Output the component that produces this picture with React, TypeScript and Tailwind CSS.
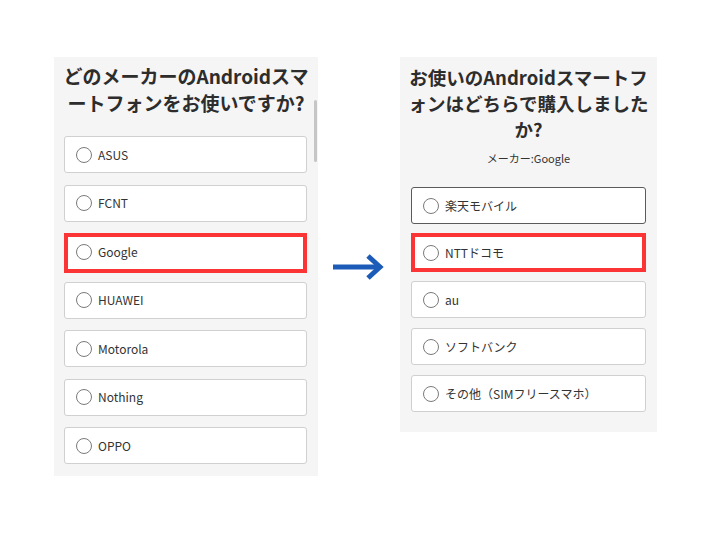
import React from 'react';

const makers = ['ASUS', 'FCNT', 'Google', 'HUAWEI', 'Motorola', 'Nothing', 'OPPO'];
const carriers = ['楽天モバイル', 'NTTドコモ', 'au', 'ソフトバンク', 'その他（SIMフリースマホ）'];

interface OptionProps {
  label: string;
  active?: boolean;
  marked?: 'left' | 'right';
}

const Option: React.FC<OptionProps> = ({ label, active, marked }) => {
  return (
    <div
      className={`relative flex items-center gap-[6px] h-[37px] pl-[11px] bg-white rounded-[3px] shrink-0 ${
        active ? 'border-[1.5px] border-[#5b5b5b]' : 'border border-[#d0d0d0]'
      }`}
    >
      <span className="w-[16px] h-[16px] rounded-full border border-[#7a7a7a] bg-white shrink-0" />
      <span className="text-[12px] text-[#333]">{label}</span>
      {marked === 'left' && (
        <span className="absolute -top-[1px] -bottom-[4px] -left-[1px] -right-[1px] border-[4px] border-[#fb3535] pointer-events-none" />
      )}
      {marked === 'right' && (
        <span className="absolute -top-[2px] -bottom-[2px] -left-[1px] -right-[1px] border-[4px] border-[#fb3535] pointer-events-none" />
      )}
    </div>
  );
};

const Arrow = () => (
  <svg width="52" height="28" viewBox="0 0 52 28" fill="none">
    <path d="M0 14H46" stroke="#1c5cb8" strokeWidth="5" />
    <path d="M35 3L47 14L35 25" stroke="#1c5cb8" strokeWidth="5" strokeLinejoin="miter" />
  </svg>
);

export default function App() {
  return (
    <div className="w-[710px] h-[533px] bg-white font-['Noto_Sans_CJK_JP','Noto_Sans',sans-serif]">
      <div className="flex items-start gap-[15px] pl-[54px] pt-[57px]">
        {/* maker question */}
        <div className="relative w-[264px] h-[419px] bg-[#f5f5f5] overflow-hidden">
          <div className="pt-[5px] text-center text-[19px] leading-[27px] font-bold text-[#2d2d2d]">
            <div className="whitespace-nowrap">どのメーカーのAndroidスマ</div>
            <div className="whitespace-nowrap">ートフォンをお使いですか?</div>
          </div>
          <div className="mt-[20px] ml-[10px] w-[243px] flex flex-col gap-[11.5px]">
            {makers.map((m) => (
              <Option key={m} label={m} marked={m === 'Google' ? 'left' : undefined} />
            ))}
            {/* next card, scrolled out of view */}
            <div className="h-[37px] bg-white rounded-[3px] border border-[#d0d0d0] shrink-0" />
          </div>
          <span className="absolute left-[260px] top-[43px] w-[3px] h-[62px] rounded-full bg-[#c6c6c6]" />
        </div>

        <div className="self-center">
          <Arrow />
        </div>

        {/* carrier question */}
        <div className="w-[257px] bg-[#f5f5f5] pt-[7px] pb-[20px]">
          <div className="text-center text-[18.5px] leading-[26px] font-bold text-[#2d2d2d]">
            <div className="whitespace-nowrap">お使いのAndroidスマートフ</div>
            <div className="whitespace-nowrap">ォンはどちらで購入しました</div>
            <div className="whitespace-nowrap">か?</div>
          </div>
          <div className="mt-[8px] text-center text-[11px] leading-[16px] text-[#333]">メーカー:Google</div>
          <div className="mt-[21px] mx-[11px] flex flex-col gap-[10px]">
            {carriers.map((c, i) => (
              <Option key={c} label={c} active={i === 0} marked={i === 1 ? 'right' : undefined} />
            ))}
          </div>
        </div>
      </div>
    </div>
  );
}
